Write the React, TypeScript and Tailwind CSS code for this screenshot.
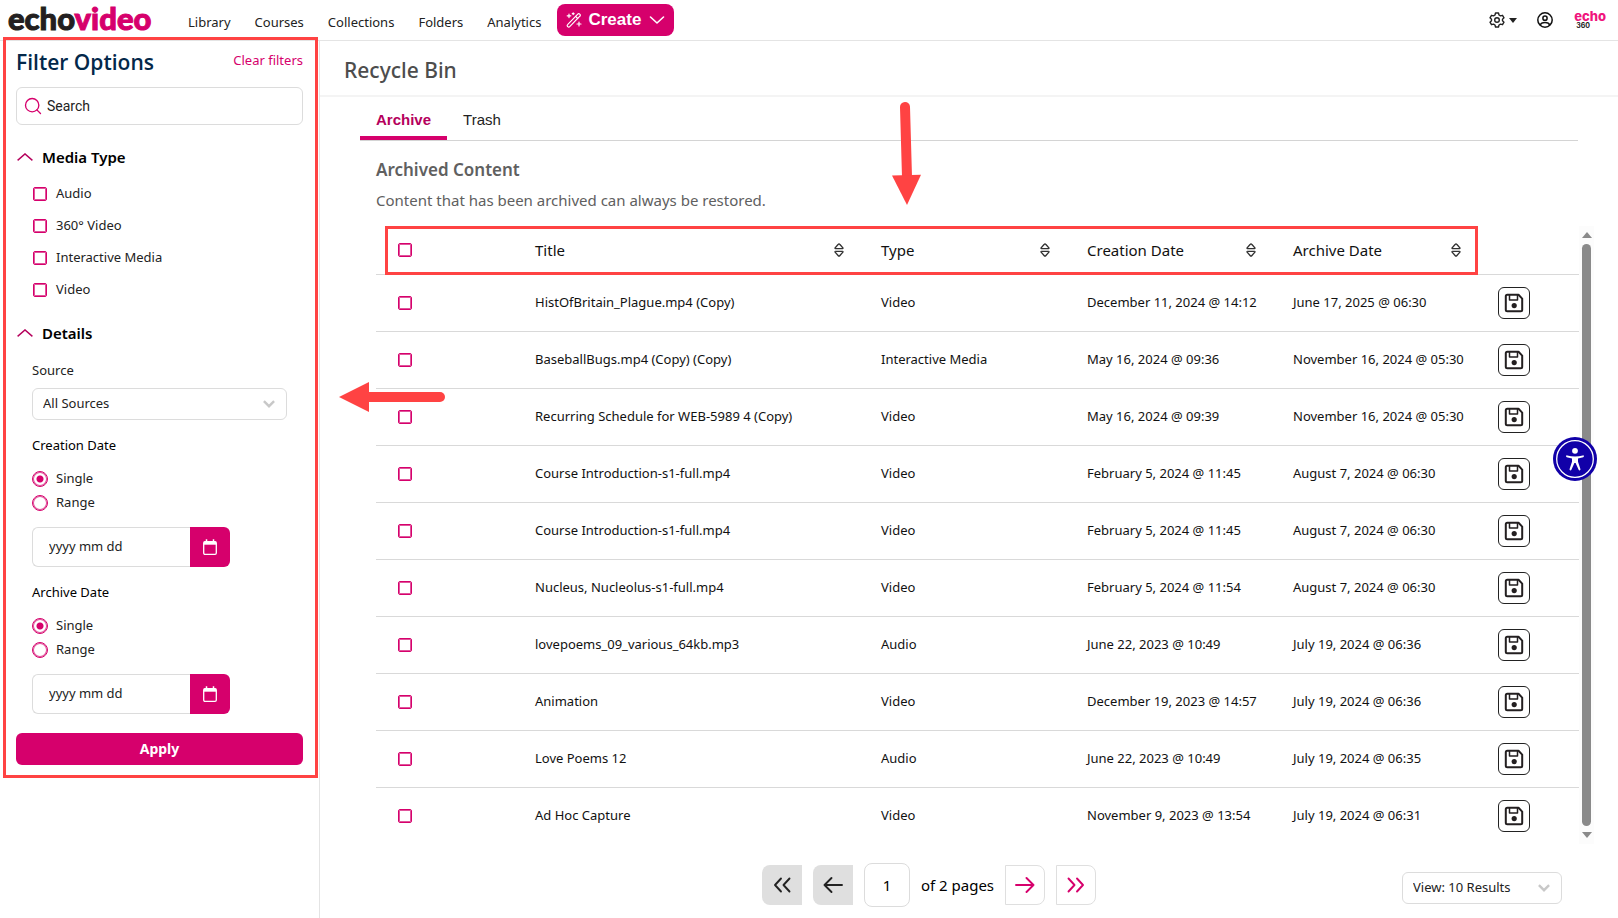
import { useState } from 'react';
import { Search } from 'lucide-react';

const FILTER_TYPES = ['Audio', '360° Video', 'Interactive Media', 'Video'];

const NAV_LINKS = ['Library', 'Courses', 'Collections', 'Folders', 'Analytics'];

const COLUMNS = ['Title', 'Type', 'Creation Date', 'Archive Date'];

const ITEMS = [
  { title: 'HistOfBritain_Plague.mp4 (Copy)', type: 'Video', created: 'December 11, 2024 @ 14:12', archived: 'June 17, 2025 @ 06:30' },
  { title: 'BaseballBugs.mp4 (Copy) (Copy)', type: 'Interactive Media', created: 'May 16, 2024 @ 09:36', archived: 'November 16, 2024 @ 05:30' },
  { title: 'Recurring Schedule for WEB-5989 4 (Copy)', type: 'Video', created: 'May 16, 2024 @ 09:39', archived: 'November 16, 2024 @ 05:30' },
  { title: 'Course Introduction-s1-full.mp4', type: 'Video', created: 'February 5, 2024 @ 11:45', archived: 'August 7, 2024 @ 06:30' },
  { title: 'Course Introduction-s1-full.mp4', type: 'Video', created: 'February 5, 2024 @ 11:45', archived: 'August 7, 2024 @ 06:30' },
  { title: 'Nucleus, Nucleolus-s1-full.mp4', type: 'Video', created: 'February 5, 2024 @ 11:54', archived: 'August 7, 2024 @ 06:30' },
  { title: 'lovepoems_09_various_64kb.mp3', type: 'Audio', created: 'June 22, 2023 @ 10:49', archived: 'July 19, 2024 @ 06:36' },
  { title: 'Animation', type: 'Video', created: 'December 19, 2023 @ 14:57', archived: 'July 19, 2024 @ 06:36' },
  { title: 'Love Poems 12', type: 'Audio', created: 'June 22, 2023 @ 10:49', archived: 'July 19, 2024 @ 06:35' },
  { title: 'Ad Hoc Capture', type: 'Video', created: 'November 9, 2023 @ 13:54', archived: 'July 19, 2024 @ 06:31' },
];

const checkboxClass =
  'block size-3.5 shrink-0 appearance-none rounded-xs border border-[#d6006c] bg-white inset-ring inset-ring-[#e0559b] checked:bg-[#d6006c]';

function WandIcon() {
  return (
    <svg viewBox="0 0 16 16" className="size-4" fill="none" stroke="currentColor" strokeLinecap="round" strokeLinejoin="round">
      <path d="M1.6 12.6 11.8 2.1a1.3 1.3 0 0 1 1.9 0l.2.2a1.3 1.3 0 0 1 0 1.9L3.7 14.7a1.3 1.3 0 0 1-1.9 0l-.2-.2a1.3 1.3 0 0 1 0-1.9Z" strokeWidth="1.2" />
      <path d="m9.6 4.4 2.1 2.1" strokeWidth="1.2" />
      <path d="M3 2v3.6M1.2 3.8h3.6M13 10v4M11 12h4M7.2.8v1.8M6.3 1.7h1.8" strokeWidth="1.2" />
    </svg>
  );
}

function GearIcon() {
  return (
    <svg viewBox="0 0 16 16" className="size-4" fill="none" stroke="currentColor" strokeWidth="1.4" strokeLinejoin="round">
      <path d="M6.5 1h3l.5 2 1.5.9 2-.6L15 5.800l-1.500 1.400v1.600L15 10.200l-1.500 2.500-2-.6-1.500.9-.5 2h-3L6 13l-1.500-.9-2 .6L1 10.200l1.500-1.400V7.200L1 5.800l1.500-2.500 2 .6L6 3Z" />
      <circle cx="8" cy="8" r="2.3" />
    </svg>
  );
}

function UserIcon() {
  return (
    <svg viewBox="0 0 16 16" className="size-4" fill="none" stroke="currentColor" strokeWidth="1.5">
      <circle cx="8" cy="8" r="7.2" />
      <circle cx="8" cy="6.2" r="2.1" />
      <path d="M3.2 13.2c.6-1.8 2.4-2.6 4.8-2.6s4.2.8 4.8 2.6" />
    </svg>
  );
}

function SortIcon() {
  return (
    <svg viewBox="0 0 10 14" className="h-3.5 w-2.5" fill="none" stroke="#333" strokeWidth="1.4" strokeLinejoin="round">
      <path d="M1.4 5.6h7.2c.4 0 .5-.4.3-.7L5.7 1.3a.9.9 0 0 0-1.4 0L1.1 4.900c-.2.3-.1.7.3.7Z" />
      <path d="M1.4 8.4h7.2c.4 0 .5.4.3.7l-3.2 3.600a.9.9 0 0 1-1.400 0L1.100 9.100c-.2-.3-.1-.7.3-.7Z" />
    </svg>
  );
}

function SaveIcon() {
  return (
    <svg viewBox="0 0 20 20" className="size-5" fill="none" stroke="currentColor" strokeWidth="2" strokeLinejoin="round">
      <path d="M1.8 3.3c0-.9.6-1.5 1.5-1.5h11.2l3.7 3.8v11.1c0 .9-.6 1.5-1.5 1.5H3.3c-.9 0-1.5-.6-1.5-1.5Z" />
      <path d="M5.5 2v5h8V2" strokeWidth="1.5" />
      <circle cx="10.2" cy="12.6" r="2.6" fill="currentColor" stroke="none" />
    </svg>
  );
}

function CalendarIcon() {
  return (
    <svg viewBox="0 0 14 16" className="h-4 w-3.5" fill="none" stroke="currentColor">
      <rect x="0.7" y="2.7" width="12.6" height="12.6" rx="1.3" strokeWidth="1.3" />
      <path d="M1 4.2h12" strokeWidth="3" />
      <path d="M3.5.3v3M10.5.3v3" strokeWidth="1.5" />
    </svg>
  );
}

function CollapseIcon() {
  return (
    <svg viewBox="0 0 16 8" className="h-2 w-4" fill="none" stroke="#b5005c" strokeWidth="1.4">
      <path d="m.6 7.4 7.4-6.5 7.4 6.5" />
    </svg>
  );
}

function SelectArrow() {
  return (
    <svg viewBox="0 0 12 8" className="pointer-events-none absolute top-3 right-3 h-2 w-3" fill="none" stroke="#c8c8c8" strokeWidth="2.4">
      <path d="m.9 1.2 5.1 5 5.1-5" />
    </svg>
  );
}

function PageIcon({ path }: { path: string }) {
  return (
    <svg viewBox="0 0 20 20" className="size-5" fill="none" stroke="currentColor" strokeWidth="1.9" strokeLinecap="round" strokeLinejoin="round">
      <path d={path} />
    </svg>
  );
}

function AccessibilityIcon() {
  return (
    <svg viewBox="0 0 44 44" className="size-11">
      <circle cx="22" cy="22" r="22" fill="#1100a8" />
      <circle cx="22" cy="22" r="18.3" fill="none" stroke="#fff" strokeWidth="1.3" />
      <circle cx="22" cy="13.8" r="2.9" fill="#fff" />
      <path d="M14.2 18.4c5 1.4 10.6 1.4 15.6 0 1.2-.3 1.6 1.4.4 1.8l-5.2 1.4v3.2l2.4 7.3c.4 1.3-1.3 1.9-1.8.7L22.6 26h-1.2l-3 6.8c-.5 1.2-2.2.6-1.8-.7l2.4-7.3v-3.200l-5.200-1.400c-1.200-.4-.8-2.100.4-1.800Z" fill="#fff" />
    </svg>
  );
}

function Header() {
  return (
    <header className="flex h-[41px] items-center border-b border-[#e4e4e4] pr-3 pl-2">
      <a href="#home" className="w-[180px] pb-1 font-[Lato] text-[31px] leading-9 font-black text-[#231f20] [-webkit-text-stroke:1px_currentColor]">
        echo<span className="text-[#d6006c]">video</span>
      </a>
      <nav className="flex gap-6">
        {NAV_LINKS.map((link) => (
          <a key={link} href={`#${link.toLowerCase()}`} className="pt-1 text-[13px] leading-5 text-[#222]">
            {link}
          </a>
        ))}
      </nav>
      <button className="ml-4 flex h-8 w-[117px] items-center justify-center gap-1.5 rounded-lg bg-[#d6006c] font-['Liberation_Sans'] text-[17px] font-bold text-white">
        <WandIcon />
        Create
        <svg viewBox="0 0 16 8" className="ml-0.5 h-2 w-4" fill="none" stroke="currentColor" strokeWidth="1.6" strokeLinecap="round" strokeLinejoin="round">
          <path d="m1.5 1 6.5 6 6.5-6" />
        </svg>
      </button>
      <div className="ml-auto flex items-center">
        <button aria-label="Settings" className="flex items-center gap-1 text-[#222]">
          <GearIcon />
          <svg viewBox="0 0 8 5" className="h-[5px] w-2" fill="currentColor">
            <path d="M0 0h8L4 5Z" />
          </svg>
        </button>
        <button aria-label="Account" className="ml-5 text-[#111]">
          <UserIcon />
        </button>
        <a href="#echo360" className="ml-5 flex flex-col pl-px font-[Inter]">
          <span className="text-[13px] leading-[11px] font-extrabold text-[#f0147d]">echo</span>
          <span className="pl-0.5 text-[7px] leading-[7px] font-bold text-[#222]">360</span>
        </a>
      </div>
    </header>
  );
}

function DateFilter({ label, name }: { label: string; name: string }) {
  const [mode, setMode] = useState('Single');

  return (
    <fieldset className="mt-[15px]">
      <legend className="text-[13px] leading-5 text-black">{label}</legend>
      <div className="mt-3 flex flex-col">
        {['Single', 'Range'].map((option) => (
          <label key={option} className="flex h-6 items-center gap-2 text-[13px] text-[#222]">
            <input
              type="radio"
              name={name}
              checked={mode === option}
              onChange={() => setMode(option)}
              className="size-4 appearance-none rounded-full border border-[#d6006c] bg-white inset-ring inset-ring-[#e0559b] checked:bg-[radial-gradient(circle,#d6006c_3px,transparent_4px)]"
            />
            {option}
          </label>
        ))}
      </div>
      <div className="mt-3 flex h-10 w-[198px]">
        <input
          aria-label={label}
          placeholder="yyyy mm dd"
          className="min-w-0 flex-1 rounded-l-md border border-r-0 border-[#dcdcdc] px-4 text-[13px] placeholder:text-[#222]"
        />
        <button aria-label={`Pick ${label}`} className="flex w-10 items-center justify-center rounded-r-md bg-[#d6006c] text-white">
          <CalendarIcon />
        </button>
      </div>
    </fieldset>
  );
}

function FilterPanel() {
  return (
    <aside className="relative w-80 shrink-0 border-r border-[#e4e4e4] px-4 pt-[5px]">
      <div className="flex h-[41px] items-start justify-between">
        <h2 className="font-['Open_Sans'] text-[21px] leading-8 font-semibold text-[#03284a]">Filter Options</h2>
        <button className="text-[13px] leading-7 text-[#d6006c]">Clear filters</button>
      </div>

      <label className="flex h-[38px] items-center gap-1 rounded-md border border-[#dcdcdc] px-1.5 text-[#d6006c]">
        <Search size={20} strokeWidth={1.6} className="shrink-0" />
        <input aria-label="Search" placeholder="Search" className="w-full font-[Roboto] text-sm outline-none placeholder:text-[#222]" />
      </label>

      {/* Media type */}
      <button className="mt-[22px] flex items-center gap-[9px] pl-px text-[15px] leading-5 font-semibold text-black">
        <CollapseIcon />
        Media Type
      </button>
      <div className="mt-[11px] flex flex-col pl-[17px]">
        {FILTER_TYPES.map((type) => (
          <label key={type} className="flex h-8 items-center gap-[9px] text-[13px] text-[#222]">
            <input type="checkbox" className={checkboxClass} />
            {type}
          </label>
        ))}
      </div>

      {/* Details */}
      <button className="mt-[17px] flex items-center gap-[9px] pl-px text-[15px] leading-5 font-semibold text-black">
        <CollapseIcon />
        Details
      </button>
      <div className="mt-[17px] px-4">
        <label htmlFor="source" className="block text-[13px] leading-5 text-[#222]">
          Source
        </label>
        <div className="relative mt-2">
          <select id="source" className="h-8 w-full appearance-none rounded-md border border-[#dcdcdc] px-2.5 text-[13px] text-[#222]">
            <option>All Sources</option>
          </select>
          <SelectArrow />
        </div>
        <DateFilter label="Creation Date" name="creation-mode" />
        <DateFilter label="Archive Date" name="archive-mode" />
      </div>

      <button className="mt-[19px] h-8 w-full rounded-md bg-[#d6006c] text-sm font-bold text-white">Apply</button>

      <div className="pointer-events-none absolute -top-1 right-px left-[3px] h-[741px] border-[3px] border-[#ff4343]"></div>
    </aside>
  );
}

function ArchiveTable() {
  return (
    <div className="relative mt-3.5 flex">
      <table className="w-full table-fixed border-collapse text-left text-[13px] text-[#111]">
        <colgroup>
          <col className="w-[143px]" />
          <col />
          <col className="w-[206px]" />
          <col className="w-[206px]" />
          <col className="w-[205px]" />
          <col className="w-[97px]" />
        </colgroup>
        <thead>
          <tr className="h-12 border-b border-[#d9d9d9]">
            <th className="pl-[22px]">
              <input type="checkbox" aria-label="Select all" className={checkboxClass} />
            </th>
            {COLUMNS.map((column) => (
              <th key={column} className="pr-[21px] pl-4 text-[15px] font-normal">
                <button className="flex w-full items-center justify-between">
                  {column}
                  <SortIcon />
                </button>
              </th>
            ))}
            <td></td>
          </tr>
        </thead>
        <tbody>
          {ITEMS.map((item, index) => (
            <tr key={index} className="h-[57px] border-b border-[#d9d9d9] last:border-b-0">
              <td className="pl-[22px]">
                <input type="checkbox" aria-label={`Select ${item.title}`} className={checkboxClass} />
              </td>
              <td className="px-4">{item.title}</td>
              <td className="px-4">{item.type}</td>
              <td className="pl-4 whitespace-nowrap">{item.created}</td>
              <td className="pl-4 whitespace-nowrap">{item.archived}</td>
              <td className="pl-4">
                <button aria-label="Restore" className="flex size-8 items-center justify-center rounded-md border border-[#222] text-[#231f20]">
                  <SaveIcon />
                </button>
              </td>
            </tr>
          ))}
        </tbody>
      </table>

      {/* Scrollbar */}
      <div className="flex w-[15px] shrink-0 flex-col items-center justify-between bg-[#fcfcfc] py-1.5 text-[#8a8a8a]">
        <svg viewBox="0 0 10 6" className="h-1.5 w-2.5" fill="currentColor">
          <path d="M5 0l5 6H0Z" />
        </svg>
        <div className="my-1.5 w-[9px] flex-1 rounded-full bg-[#8a8a8a]"></div>
        <svg viewBox="0 0 10 6" className="h-1.5 w-2.5" fill="currentColor">
          <path d="M0 0h10L5 6Z" />
        </svg>
      </div>

      <div className="pointer-events-none absolute top-0 right-[116px] left-[9px] h-[49px] border-[3px] border-[#ff4343]"></div>
    </div>
  );
}

function Pagination() {
  return (
    <div className="mt-[19px] flex items-center pr-8 text-[15px]">
      <div className="flex flex-1 items-center justify-center gap-[11px] pl-20">
        <button aria-label="First page" className="flex size-10 items-center justify-center rounded-l-lg bg-[#dfdfdf] text-[#222]">
          <PageIcon path="M9 3.5 3 10l6 6.500M17.500 3.500l-6 6.500 6 6.500" />
        </button>
        <button aria-label="Previous page" className="flex size-10 items-center justify-center rounded-l-lg bg-[#dfdfdf] text-[#222]">
          <PageIcon path="M19 10H1.5M8.5 3l-7 7 7 7" />
        </button>
        <input aria-label="Page" defaultValue="1" className="h-11 w-[46px] rounded-lg border border-[#dcdcdc] text-center" />
        <span className="text-black">of 2 pages</span>
        <button aria-label="Next page" className="flex size-10 items-center justify-center rounded-r-lg border border-[#dfdfdf] text-[#d6006c]">
          <PageIcon path="M1 10h17.5M11.5 3l7 7-7 7" />
        </button>
        <button aria-label="Last page" className="flex size-10 items-center justify-center rounded-r-lg border border-[#dfdfdf] text-[#d6006c]">
          <PageIcon path="m2.500 3.500 6 6.500-6 6.500M11 3.500l6 6.500-6 6.500" />
        </button>
      </div>
      <div className="relative mt-1.5 w-40">
        <select aria-label="Results per page" className="h-8 w-full appearance-none rounded-md border border-[#dcdcdc] px-2.5 text-[13px] text-[#222]">
          <option>View: 10 Results</option>
        </select>
        <SelectArrow />
      </div>
    </div>
  );
}

export default function App() {
  return (
    <div className="relative flex min-h-screen flex-col bg-white font-['Noto_Sans',sans-serif]">
      <Header />
      <div className="flex flex-1">
        <FilterPanel />
        <main className="min-w-0 flex-1">
          <div className="border-b-2 border-[#f4f4f4] px-6 pt-[15px] pb-[11px]">
            <h1 className="text-[21px] leading-7 font-medium text-[#4d4d4d]">Recycle Bin</h1>
          </div>
          <div className="pr-6 pl-10">
            <div role="tablist" className="mr-4 flex border-b border-[#d4d4d4] font-['Liberation_Sans'] text-[15px]">
              <button role="tab" aria-selected="true" className="h-[43px] border-b-4 border-[#d6006c] px-4 pt-2 font-bold text-[#b5005c]">
                Archive
              </button>
              <button role="tab" aria-selected="false" className="h-[43px] border-b-4 border-transparent px-4 pt-2 text-[#222]">
                Trash
              </button>
            </div>
            <section className="pt-[15px] pl-4">
              <h2 className="text-[17px] leading-7 font-semibold text-[#606060]">Archived Content</h2>
              <p className="mt-1 text-[15px] leading-6 text-[#606060]">Content that has been archived can always be restored.</p>
              <ArchiveTable />
              <Pagination />
            </section>
          </div>
        </main>
      </div>

      {/* Callout arrows */}
      <svg viewBox="0 0 30 104" className="pointer-events-none absolute top-[102px] left-[892px] h-[104px] w-[30px]" fill="#ff4343">
        <path d="M13 5 15 75" stroke="#ff4343" strokeWidth="10" strokeLinecap="round" />
        <path d="M0 73.5 29 72.7 15 103Z" />
      </svg>
      <svg viewBox="0 0 106 30" className="pointer-events-none absolute top-[382px] left-[339px] h-[30px] w-[106px]" fill="#ff4343">
        <path d="M25 15H101" stroke="#ff4343" strokeWidth="10" strokeLinecap="round" />
        <path d="M0 15 30 0V30Z" />
      </svg>

      <button aria-label="Accessibility" className="absolute top-[437px] right-[21px] rounded-full">
        <AccessibilityIcon />
      </button>
    </div>
  );
}
